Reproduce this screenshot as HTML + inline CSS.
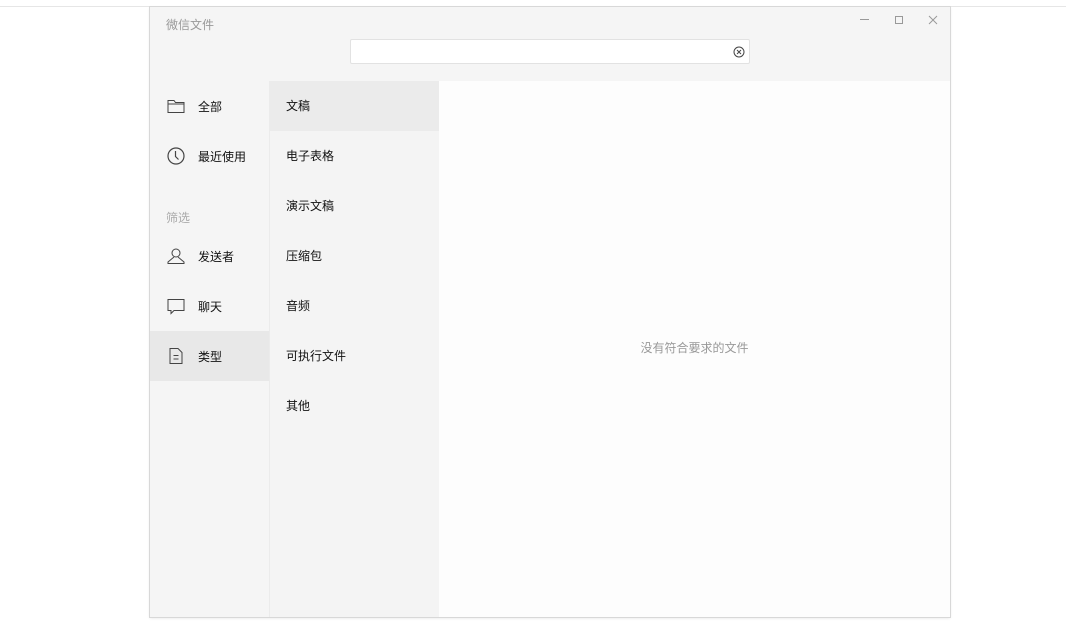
<!DOCTYPE html>
<html><head><meta charset="utf-8"><style>
*{margin:0;padding:0;box-sizing:border-box}
body{width:1066px;height:623px;background:#fff;position:relative;overflow:hidden;font-family:"Liberation Sans","Noto Sans CJK SC",sans-serif;font-size:12px;color:#111}
.topline{position:absolute;left:0;right:0;top:6px;height:1px;background:#e6e6e6}
.win{position:absolute;left:150px;top:7px;width:800px;height:610px;background:#f5f5f5;box-shadow:0 0 0 1px #d8d8d8,0 1px 3px rgba(0,0,0,.12)}
.title{position:absolute;left:16px;top:9px;color:#999;font-size:12px}
.search{position:absolute;left:200px;top:32px;width:400px;height:25px;background:#fff;border:1px solid #e2e2e2;border-radius:2px}
.left{position:absolute;left:0;top:74px;width:119px;bottom:0;background:#f5f5f5}
.mid{position:absolute;left:119px;top:74px;width:170px;bottom:0;background:#f4f4f4;border-left:1px solid #ebebeb}
.main{position:absolute;left:289px;top:74px;right:0;bottom:0;background:#fdfdfd}
.it{position:absolute;left:0;width:119px;height:50px;display:flex;align-items:center;padding-left:16px}
.it svg{width:20px;height:20px;margin-right:12px}
.m{position:absolute;left:0;width:170px;height:50px;line-height:50px;padding-left:16px}
</style></head><body>
<div class="topline"></div>
<div class="win">
<div class="title">微信文件</div>
<svg style="position:absolute;left:709px;top:7px" width="12" height="12"><line x1="1" y1="5.5" x2="10" y2="5.5" stroke="#999"/></svg>
<svg style="position:absolute;left:743px;top:7px" width="12" height="12"><rect x="2.5" y="2.5" width="7" height="7" fill="none" stroke="#999"/></svg>
<svg style="position:absolute;left:777px;top:7px" width="12" height="12"><path d="M2 2L10 10M10 2L2 10" stroke="#999"/></svg>
<div class="search"><svg style="position:absolute;right:4px;top:6px" width="12" height="12"><circle cx="6" cy="6" r="5" fill="none" stroke="#444"/><path d="M4 4L8 8M8 4L4 8" stroke="#444"/></svg></div>
<div class="left">
<div class="it" style="top:0"><svg viewBox="0 0 20 20"><path d="M2 4.5h6l1.5 2H18v10H2z M2 8h16" fill="none" stroke="#444"/></svg>全部</div>
<div class="it" style="top:50px"><svg viewBox="0 0 20 20"><circle cx="10" cy="10" r="8" fill="none" stroke="#444" stroke-width="1.2"/><path d="M9.5 5v5.5l3 3" fill="none" stroke="#444" stroke-width="1.2"/></svg>最近使用</div>
<div style="position:absolute;left:16px;top:128px;color:#aaa;font-size:12px">筛选</div>
<div class="it" style="top:150px"><svg viewBox="0 0 20 20"><circle cx="10" cy="7" r="4" fill="none" stroke="#444"/><path d="M8 11l-6 5v1.5h16V16l-6-5" fill="none" stroke="#444"/></svg>发送者</div>
<div class="it" style="top:200px"><svg viewBox="0 0 20 20"><path d="M2 3.5h16v11H8l-3 3v-3H2z" fill="none" stroke="#444"/></svg>聊天</div>
<div class="it" style="top:250px;background:#e8e8e8"><svg viewBox="0 0 20 20"><path d="M4 2.5h8l4 4v11H4z M7.5 9.5h5M7.5 13h5" fill="none" stroke="#444"/></svg>类型</div>
</div>
<div class="mid">
<div class="m" style="top:0;background:#ebebeb">文稿</div>
<div class="m" style="top:50px">电子表格</div>
<div class="m" style="top:100px">演示文稿</div>
<div class="m" style="top:150px">压缩包</div>
<div class="m" style="top:200px">音频</div>
<div class="m" style="top:250px">可执行文件</div>
<div class="m" style="top:300px">其他</div>
</div>
<div class="main"><div style="position:absolute;left:0;right:0;top:258px;text-align:center;color:#999;font-size:12px">没有符合要求的文件</div></div>
</div>
</body></html>
